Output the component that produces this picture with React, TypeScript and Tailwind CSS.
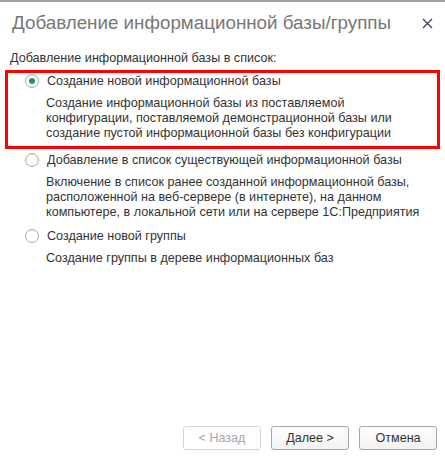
import type { ReactNode } from "react";

function Radio({ checked }: { checked?: boolean }) {
  return (
    <span className="flex h-[14px] w-[14px] shrink-0 items-center justify-center rounded-full border border-[#a9a9a9] bg-white shadow-[inset_0_1px_1px_rgba(0,0,0,0.08)]">
      {checked && <span className="h-[6px] w-[6px] rounded-full bg-[#1a9a52]" />}
    </span>
  );
}

function Option({
  checked,
  title,
  children,
}: {
  checked?: boolean;
  title: string;
  children: ReactNode;
}) {
  return (
    <div>
      <div className="flex h-[14px] items-center pl-[25px]">
        <Radio checked={checked} />
        <span className="ml-[8px] text-[12.6px] leading-[15px] text-[#333]">{title}</span>
      </div>
      <div className="mt-2 pl-[46px] text-[12.6px] leading-[15px] text-[#333]">{children}</div>
    </div>
  );
}

function Button({ children, disabled }: { children: ReactNode; disabled?: boolean }) {
  return (
    <button
      type="button"
      disabled={disabled}
      className={`flex h-6 w-[78px] items-center justify-center rounded-[3px] border text-[12.6px] ${
        disabled
          ? "border-[#d6d6d6] bg-white text-[#a6a6a6]"
          : "border-[#a6a6a6] bg-gradient-to-b from-white to-[#f2f2f2] text-[#333]"
      }`}
    >
      {children}
    </button>
  );
}

export default function App() {
  return (
    <div
      className="flex h-[462px] w-[445px] flex-col border-t-2 border-[#a0a0a0] bg-white"
      style={{ fontFamily: '"Liberation Sans", Arial, sans-serif' }}
    >
      <div className="flex h-[42px] shrink-0 items-center justify-between pl-[12px] pr-[12px]">
        <span className="text-[18.8px] leading-none text-[#777]">
          Добавление информационной базы/группы
        </span>
        <svg width="11" height="11" viewBox="0 0 11 11" className="text-[#4a3a5a]">
          <path d="M1 1 L10 10 M10 1 L1 10" stroke="currentColor" strokeWidth="1.3" />
        </svg>
      </div>

      <div className="mt-[7px] pl-[10px] text-[12.6px] leading-[15px] text-[#333]">
        Добавление информационной базы в список:
      </div>

      <div className="mx-[5px] mt-[4px] border-[3px] border-[#ff0000] pb-[5px] pt-[1px]">
        <div className="-ml-[8px]">
          <Option checked title="Создание новой информационной базы">
            Создание информационной базы из поставляемой
            <br />
            конфигурации, поставляемой демонстрационной базы или
            <br />
            создание пустой информационной базы без конфигурации
          </Option>
        </div>
      </div>

      <div className="mt-[4px]">
        <Option title="Добавление в список существующей информационной базы">
          Включение в список ранее созданной информационной базы,
          <br />
          расположенной на веб-сервере (в интернете), на данном
          <br />
          компьютере, в локальной сети или на сервере 1С:Предприятия
        </Option>
      </div>

      <div className="mt-[9px]">
        <Option title="Создание новой группы">Создание группы в дереве информационных баз</Option>
      </div>

      <div className="mt-auto flex justify-end gap-[10px] pb-[12px] pr-[8px]">
        <Button disabled>&lt; Назад</Button>
        <Button>Далее &gt;</Button>
        <Button>Отмена</Button>
      </div>
    </div>
  );
}
